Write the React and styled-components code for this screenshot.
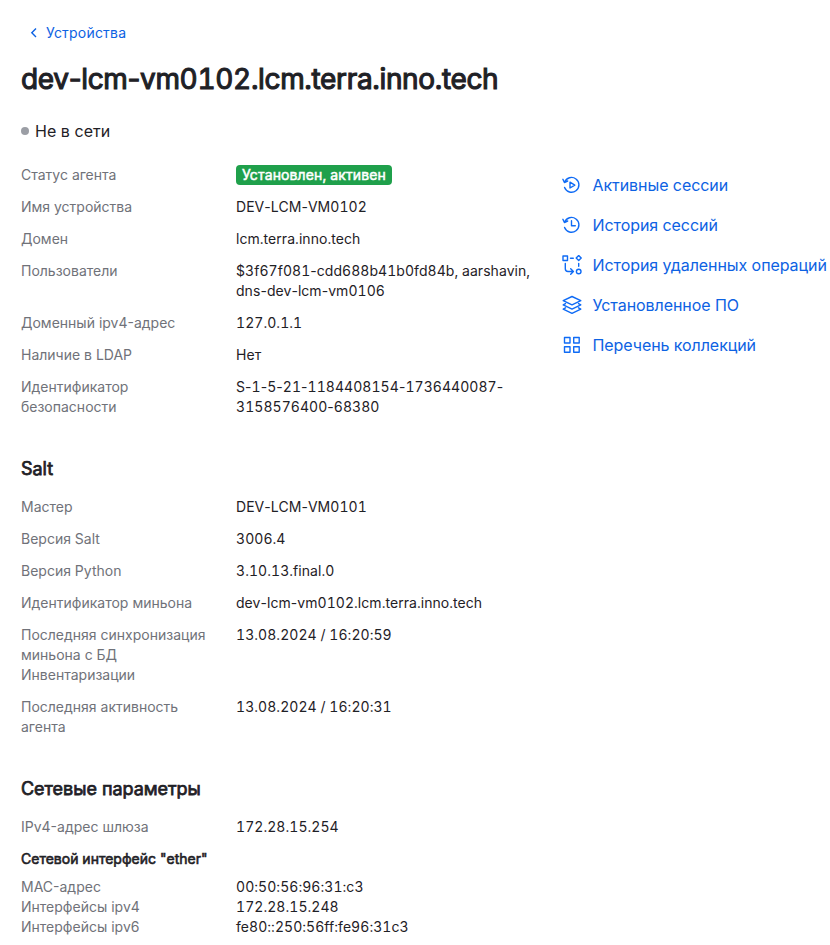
import React from 'react';
import styled, { createGlobalStyle } from 'styled-components';

const GlobalStyle = createGlobalStyle`
    * {
        box-sizing: border-box;
    }

    body {
        margin: 0;
        background: #fff;
        color: #1f2126;
        font-family: Inter, 'Liberation Sans', sans-serif;
        font-size: 14px;
        line-height: 20px;
    }
`

const Page = styled.main`
    width: 830px;
    height: 945px;
    padding: 21px 0 0 21px;
    overflow: hidden;
`

const BackLink = styled.a`
    display: flex;
    align-items: center;
    gap: 8px;
    width: max-content;
    height: 24px;
    padding-left: 9px;
    color: #0d62e3;
    letter-spacing: 0.2px;
    text-decoration: none;
`

const Title = styled.h1`
    margin: 16px 0 0;
    font-size: 28px;
    font-weight: 400;
    line-height: 36px;
    letter-spacing: -0.34px;
    font-variant-numeric: tabular-nums;
    -webkit-text-stroke: 1.1px currentColor;
`

const Presence = styled.div`
    display: flex;
    align-items: center;
    gap: 6px;
    height: 24px;
    margin-top: 22px;
    font-size: 16px;
    letter-spacing: 0.05px;
`

const Dot = styled.span`
    width: 8px;
    height: 8px;
    border-radius: 50%;
    background: #9b9ea5;
`

const Columns = styled.div`
    display: flex;
    margin-top: 22px;
`

const Details = styled.div`
    flex: none;
    width: 541px;
`

const Section = styled.section`
    display: flex;
    flex-direction: column;
    gap: ${(props => props.$gap || '12px')};
`

const SectionTitle = styled.h2`
    margin: 40px 0 16px;
    font-size: 18px;
    font-weight: 400;
    line-height: 24px;
    letter-spacing: -0.04px;
    -webkit-text-stroke: 0.75px currentColor;
`

const SubTitle = styled.h3`
    margin: 12px 0 8px;
    font-size: 14px;
    font-weight: 400;
    line-height: 20px;
    -webkit-text-stroke: 0.6px currentColor;
`

const Row = styled.div`
    display: grid;
    grid-template-columns: 215px 1fr;
`

const Label = styled.span`
    color: #707279;
    white-space: pre-line;
`

const Value = styled.div`
    letter-spacing: 0.05px;
    font-variant-numeric: tabular-nums;
`

const Line = styled.div`
    white-space: nowrap;
`

// tabular figures widen the hyphen as well, so it goes back to its own width
const Hyphen = styled.span`
    font-variant-numeric: normal;
`

const Badge = styled.span`
    display: inline-block;
    height: 20px;
    padding: 0 6px;
    border-radius: 4px;
    background: #1fa04b;
    color: #fff;
    letter-spacing: 0.13px;
    -webkit-text-stroke: 0.5px currentColor;
`

const Links = styled.nav`
    display: flex;
    flex-direction: column;
    gap: 16px;
    padding-top: 8px;
`

const NavLink = styled.a`
    display: flex;
    align-items: center;
    gap: 10.5px;
    height: 24px;
    color: #0d62e3;
    font-size: 16px;
    letter-spacing: -0.07px;
    white-space: nowrap;
    text-decoration: none;
`

const Icon = ({ children }) => (
    <svg width="20" height="20" viewBox="0 0 20 20" fill="none" stroke="#0f6bf5" strokeWidth="1.4" strokeLinecap="round" strokeLinejoin="round">
        {children}
    </svg>
)

const device = [
    ['Статус агента', <Badge>Установлен, активен</Badge>],
    ['Имя устройства', 'DEV-LCM-VM0102'],
    ['Домен', 'lcm.terra.inno.tech'],
    ['Пользователи', '$3f67f081-cdd688b41b0fd84b, aarshavin,\ndns-dev-lcm-vm0106'],
    ['Доменный ipv4-адрес', '127.0.1.1'],
    ['Наличие в LDAP', 'Нет'],
    ['Идентификатор\nбезопасности', 'S-1-5-21-1184408154-1736440087-\n3158576400-68380'],
]

const salt = [
    ['Мастер', 'DEV-LCM-VM0101'],
    ['Версия Salt', '3006.4'],
    ['Версия Python', '3.10.13.final.0'],
    ['Идентификатор миньона', 'dev-lcm-vm0102.lcm.terra.inno.tech'],
    ['Последняя синхронизация\nминьона с БД\nИнвентаризации', '13.08.2024 / 16:20:59'],
    ['Последняя активность\nагента', '13.08.2024 / 16:20:31'],
]

const network = [['IPv4-адрес шлюза', '172.28.15.254']]

const ether = [
    ['MAC-адрес', '00:50:56:96:31:c3'],
    ['Интерфейсы ipv4', '172.28.15.248'],
    ['Интерфейсы ipv6', 'fe80::250:56ff:fe96:31c3'],
]

const history = 'M2.6 7.2A7.4 7.4 0 1 1 2.6 12.5M.9 4.3l1.5 3.2L5.7 6'

const links = [
    ['Активные сессии', <><path d={history} /><path d="M8 7.2l4.8 2.9L8 13z" /></>],
    ['История сессий', <><path d={history} /><path d="M9.5 5.8v5h3.8" /></>],
    ['История удаленных операций', (
        <>
            <path d="M1 1h4.5v4.5H1zM16.7 .6l2.5 2.5-2.5 2.5-2.5-2.5zM8.5 3.3h2.8M16.7 8.5v2.7" />
            <path d="M3.3 8.5v5.3q0 2.7 2.7 2.7h5M8.7 13.8l2.7 2.7-2.7 2.7" />
            <circle cx="16.7" cy="16.5" r="2.3" />
        </>
    )],
    ['Установленное ПО', (
        <>
            <path d="M10 1.5l8.8 4.2-8.8 4.2-8.8-4.2z" />
            <path d="M3.5 8.6L1.2 9.9l8.8 4.2 8.8-4.2-2.3-1.3M3.5 12.8l-2.3 1.3 8.8 4.2 8.8-4.2-2.3-1.3" />
        </>
    )],
    ['Перечень коллекций', <path d="M2.5 2.5H8V8H2.5zM11.7 2.5h5.5V8h-5.5zM2.5 11.7H8v5.5H2.5zM11.7 11.7h5.5v5.5h-5.5z" />],
]

const Figures = ({ text }) => text.split('-').map((part, i) => (
    <React.Fragment key={i}>
        {i > 0 && <Hyphen>-</Hyphen>}
        {part}
    </React.Fragment>
))

const Rows = ({ items, gap }) => (
    <Section $gap={gap}>
        {items.map(([label, value]) => (
            <Row key={label}>
                <Label>{label}</Label>
                <Value>
                    {typeof value === 'string'
                        ? value.split('\n').map(line => <Line key={line}><Figures text={line} /></Line>)
                        : value}
                </Value>
            </Row>
        ))}
    </Section>
)

const App = () => {
    return (
        <>
            <GlobalStyle />
            <Page>
                <BackLink>
                    <svg width="8" height="10" viewBox="0 0 8 10" fill="none" stroke="currentColor" strokeWidth="1.4"><path d="M6 .5L1.8 4.7 6 8.9" /></svg>
                    Устройства
                </BackLink>
                <Title><Figures text="dev-lcm-vm0102.lcm.terra.inno.tech" /></Title>
                <Presence><Dot />Не в сети</Presence>
                <Columns>
                    <Details>
                        <Rows items={device} />
                        <SectionTitle>Salt</SectionTitle>
                        <Rows items={salt} />
                        <SectionTitle>Сетевые параметры</SectionTitle>
                        <Rows items={network} />
                        <SubTitle>Сетевой интерфейс "ether"</SubTitle>
                        <Rows items={ether} gap="0px" />
                    </Details>
                    <Links>
                        {links.map(([label, icon]) => (
                            <NavLink key={label}><Icon>{icon}</Icon>{label}</NavLink>
                        ))}
                    </Links>
                </Columns>
            </Page>
        </>
    );
};

export default App;
